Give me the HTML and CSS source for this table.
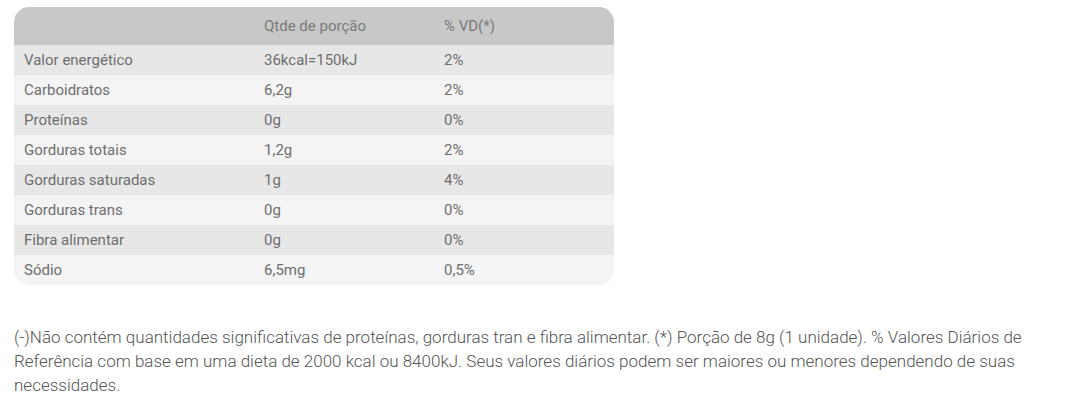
FILE: index.html
```html
<!DOCTYPE html>
<html lang="pt-BR">
<head>
<meta charset="utf-8">
<title>Tabela nutricional</title>
<link rel="stylesheet" href="styles.css">
</head>
<body>
<div class="page">
  <table class="nutri">
    <thead>
      <tr><th></th><th>Qtde de porção</th><th>% VD(*)</th></tr>
    </thead>
    <tbody>
      <tr><td>Valor energético</td><td>36kcal=150kJ</td><td>2%</td></tr>
      <tr><td>Carboidratos</td><td>6,2g</td><td>2%</td></tr>
      <tr><td>Proteínas</td><td>0g</td><td>0%</td></tr>
      <tr><td>Gorduras totais</td><td>1,2g</td><td>2%</td></tr>
      <tr><td>Gorduras saturadas</td><td>1g</td><td>4%</td></tr>
      <tr><td>Gorduras trans</td><td>0g</td><td>0%</td></tr>
      <tr><td>Fibra alimentar</td><td>0g</td><td>0%</td></tr>
      <tr><td>Sódio</td><td>6,5mg</td><td>0,5%</td></tr>
    </tbody>
  </table>
  <p class="note">(-)Não contém quantidades significativas de proteínas, gorduras tran e fibra alimentar. (*) Porção de 8g (1 unidade). % Valores Diários de Referência com base em uma dieta de 2000 kcal ou 8400kJ. Seus valores diários podem ser maiores ou menores dependendo de suas necessidades.</p>
</div>
</body>
</html>
```
FILE: styles.css
```css
html, body {
  margin: 0;
  background: #fff;
}
.page {
  padding: 7px 14px 0 14px;
  font-family: Roboto, "Liberation Sans", sans-serif;
  color: #666;
}
.nutri {
  width: 600px;
  border-collapse: separate;
  border-spacing: 0;
  border-radius: 15px;
  overflow: hidden;
  font-size: 15px;
}
.nutri th {
  background: #c8c8c8;
  height: 38px;
  font-weight: 400;
  text-align: left;
  padding: 0 10px;
  color: #7a7a7a;
  vertical-align: middle;
}
.nutri td {
  height: 30px;
  padding: 0 10px;
  vertical-align: middle;
  color: #6e6e6e;
}
.nutri th:nth-child(1), .nutri td:nth-child(1) { width: 220px; }
.nutri th:nth-child(2), .nutri td:nth-child(2) { width: 160px; }
.nutri tbody tr:nth-child(odd) td { background: #e7e7e7; }
.nutri tbody tr:nth-child(even) td { background: #f4f4f4; }
.note {
  margin: 40px 0 0 0;
  font-size: 17px;
  font-weight: 300;
  line-height: 24px;
  color: #555;
  padding-right: 14px;
}
```
